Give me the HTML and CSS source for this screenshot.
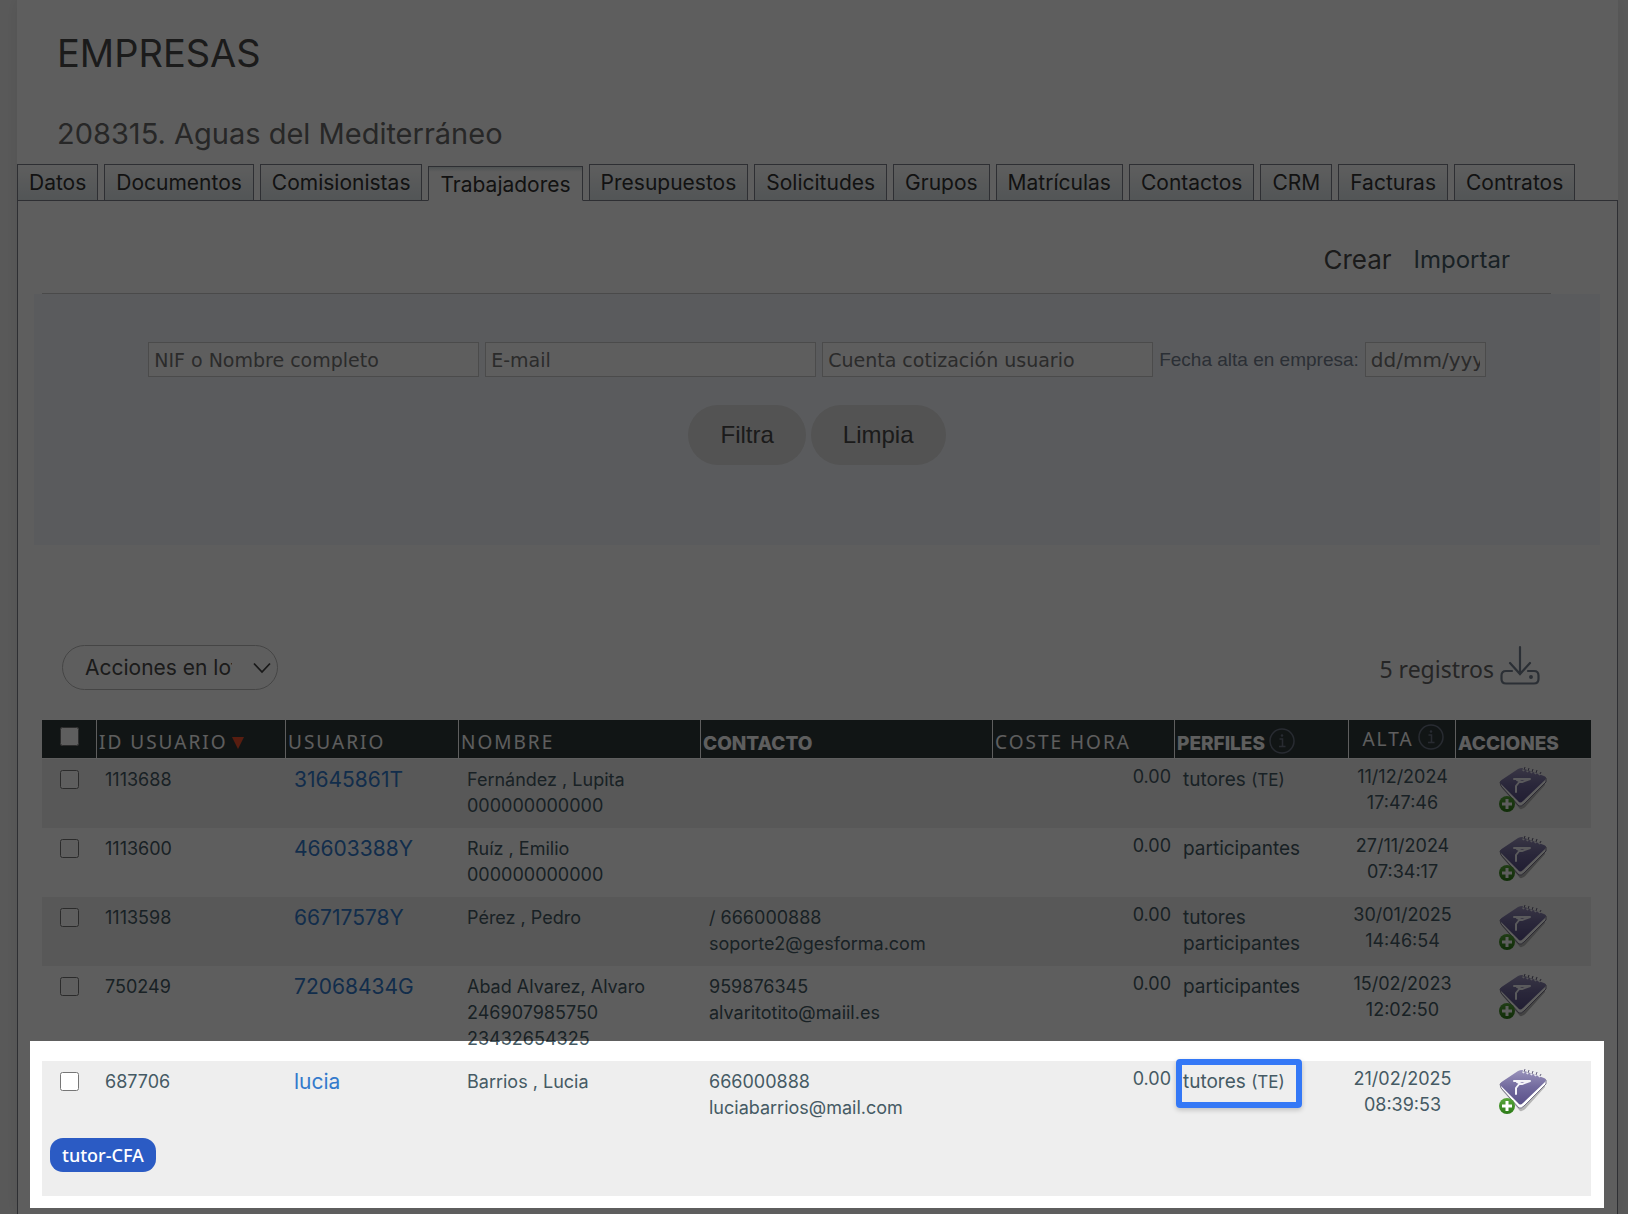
FILE: index.html
```html
<!DOCTYPE html>
<html lang="es">
<head>
<meta charset="utf-8">
<meta name="viewport" content="width=device-width, initial-scale=1">
<title>Empresas - Trabajadores</title>
<link rel="stylesheet" href="styles.css">
</head>
<body>
<svg class="sprite" aria-hidden="true">
  <defs>
    <linearGradient id="cover" x1="0" y1="0" x2="0" y2="1">
      <stop offset="0" stop-color="#9a93bb"/>
      <stop offset="0.5" stop-color="#726a9e"/>
      <stop offset="1" stop-color="#5a5189"/>
    </linearGradient>
    <linearGradient id="plus" x1="0" y1="0" x2="0" y2="1">
      <stop offset="0" stop-color="#5aa83c"/>
      <stop offset="1" stop-color="#2c7a17"/>
    </linearGradient>
  </defs>
  <symbol id="icon-note" viewBox="0 0 48 48">
    <path d="M2 22 L21 44 Q24 45 28 40 L46 20 L46 14 L22 36Z" fill="#b5b5b5"/>
    <path d="M1 17 L2 21 L20 41 Q22 42 25 39 L47 17 L47 13 L24 6Z" fill="#fff" stroke="#77738a" stroke-width="1"/>
    <path d="M1 17 Q2 15 4 14 L19 4 Q21 3 23 3 L45 11 Q48 12 46 15 L24 36 Q21 39 19 36 L2 19 Q1 18 1 17Z" fill="url(#cover)"/>
    <path d="M24 6 l2-4 M28 7 l2-4 M32 8 l2-4 M36 9 l2-4 M40 10 l2-3" stroke="#e9e8ef" stroke-width="2" fill="none"/>
    <path d="M25 5 l1-3 M29 6 l1-3 M33 7 l1-3 M37 8 l1-3 M41 9 l1-2" stroke="#6b6780" stroke-width="1" fill="none"/>
    <path d="M15 14 L31 14 L23 17 L18 15 M21 16 L17 21 L17 27" fill="none" stroke="#f4f3f8" stroke-width="2" stroke-linejoin="round" stroke-linecap="round"/>
    <circle cx="8" cy="39" r="8" fill="url(#plus)"/>
    <path d="M8 34 V44 M3 39 H13" stroke="#fff" stroke-width="3"/>
  </symbol>
  <symbol id="icon-info" viewBox="0 0 26 26">
    <circle cx="13" cy="13" r="12" fill="none" stroke="currentColor" stroke-width="1.5"/>
    <path d="M10.500 11 H13.500 V18 M10 18.500 H16.500" fill="none" stroke="currentColor" stroke-width="1.500"/>
    <circle cx="13" cy="7.500" r="1.200" fill="currentColor"/>
  </symbol>
</svg>

<div class="page">
  <h1 class="title">EMPRESAS</h1>
  <h2 class="company">208315. Aguas del Mediterráneo</h2>

  <nav class="tabs" aria-label="Secciones de empresa">
    <a class="tab" href="#datos">Datos</a>
    <a class="tab" href="#documentos">Documentos</a>
    <a class="tab" href="#comisionistas">Comisionistas</a>
    <a class="tab tab-active" href="#trabajadores" aria-current="page">Trabajadores</a>
    <a class="tab" href="#presupuestos">Presupuestos</a>
    <a class="tab" href="#solicitudes">Solicitudes</a>
    <a class="tab" href="#grupos">Grupos</a>
    <a class="tab" href="#matriculas">Matrículas</a>
    <a class="tab" href="#contactos">Contactos</a>
    <a class="tab" href="#crm">CRM</a>
    <a class="tab" href="#facturas">Facturas</a>
    <a class="tab" href="#contratos">Contratos</a>
  </nav>

  <main class="panel">
    <div class="toolbar">
      <a class="create" href="#crear">Crear</a>
      <a class="import" href="#importar">Importar</a>
    </div>

    <form class="filter">
      <div class="fields">
        <input class="field" type="text" placeholder="NIF o Nombre completo" aria-label="NIF o Nombre completo">
        <input class="field" type="text" placeholder="E-mail" aria-label="E-mail">
        <input class="field" type="text" placeholder="Cuenta cotización usuario" aria-label="Cuenta cotización usuario">
        <label class="field-label" for="alta">Fecha alta en empresa:</label>
        <input class="field field-date" id="alta" type="text" placeholder="dd/mm/yyyy">
      </div>
      <div class="buttons">
        <button class="button" type="button">Filtra</button>
        <button class="button" type="button">Limpia</button>
      </div>
    </form>

    <div class="listbar">
      <div class="batch">
        <select class="batch-select" aria-label="Acciones en lote">
          <option>Acciones en lote</option>
        </select>
        <svg class="chevron" viewBox="0 0 18 12" aria-hidden="true"><path d="M1 1.500 L9 10 L17 1.500" fill="none" stroke="#444" stroke-width="1.800"/></svg>
      </div>
      <div class="count">
        <span>5 registros</span>
        <a class="download" href="#descargar" aria-label="Descargar">
          <svg viewBox="0 0 40 40" width="40" height="40" fill="none" stroke="#74808f" stroke-width="2.200" stroke-linecap="round" aria-hidden="true">
            <path d="M20 2 V28 M10 18 L20 29 L30 18"/>
            <path d="M12 26 H6 Q1.500 26 1.500 30.500 V34 Q1.500 38.500 6 38.500 H34 Q38.500 38.500 38.500 34 V30.500 Q38.500 26 34 26 H28"/>
            <circle cx="31" cy="32" r="1.200" fill="#74808f" stroke-width="1.500"/>
          </svg>
        </a>
      </div>
    </div>

    <div class="listing">
      <table class="grid">
        <colgroup>
          <col class="c-check"><col class="c-id"><col class="c-user"><col class="c-name"><col class="c-contact">
          <col class="c-cost"><col class="c-profile"><col class="c-date"><col class="c-actions">
        </colgroup>
        <thead>
          <tr>
            <th class="check"><input type="checkbox" aria-label="Seleccionar todos"></th>
            <th>ID USUARIO<span class="sort" aria-hidden="true"></span></th>
            <th>USUARIO</th>
            <th>NOMBRE</th>
            <th class="strong">CONTACTO</th>
            <th>COSTE HORA</th>
            <th class="strong"><span class="with-info">PERFILES<svg class="info" aria-hidden="true"><use href="#icon-info"/></svg></span></th>
            <th class="center"><span class="with-info">ALTA<svg class="info" aria-hidden="true"><use href="#icon-info"/></svg></span></th>
            <th class="strong">ACCIONES</th>
          </tr>
        </thead>
        <tbody>
          <tr class="odd">
            <td class="check"><input type="checkbox" aria-label="Seleccionar 1113688"></td>
            <td>1113688</td>
            <td><a class="user" href="#31645861T">31645861T</a></td>
            <td>Fernández , Lupita<br>000000000000</td>
            <td></td>
            <td class="cost">0.00</td>
            <td class="profile">tutores <small>(TE)</small></td>
            <td class="date">11/12/2024<br>17:47:46</td>
            <td class="actions"><a href="#nota" aria-label="Añadir nota"><svg class="note"><use href="#icon-note"/></svg></a></td>
          </tr>
          <tr>
            <td class="check"><input type="checkbox" aria-label="Seleccionar 1113600"></td>
            <td>1113600</td>
            <td><a class="user" href="#46603388Y">46603388Y</a></td>
            <td>Ruíz , Emilio<br>000000000000</td>
            <td></td>
            <td class="cost">0.00</td>
            <td class="profile">participantes</td>
            <td class="date">27/11/2024<br>07:34:17</td>
            <td class="actions"><a href="#nota" aria-label="Añadir nota"><svg class="note"><use href="#icon-note"/></svg></a></td>
          </tr>
          <tr class="odd">
            <td class="check"><input type="checkbox" aria-label="Seleccionar 1113598"></td>
            <td>1113598</td>
            <td><a class="user" href="#66717578Y">66717578Y</a></td>
            <td>Pérez , Pedro</td>
            <td>/ 666000888<br>soporte2@gesforma.com</td>
            <td class="cost">0.00</td>
            <td class="profile">tutores<br>participantes</td>
            <td class="date">30/01/2025<br>14:46:54</td>
            <td class="actions"><a href="#nota" aria-label="Añadir nota"><svg class="note"><use href="#icon-note"/></svg></a></td>
          </tr>
          <tr>
            <td class="check"><input type="checkbox" aria-label="Seleccionar 750249"></td>
            <td>750249</td>
            <td><a class="user" href="#72068434G">72068434G</a></td>
            <td>Abad Alvarez, Alvaro<br>246907985750<br>23432654325</td>
            <td>959876345<br>alvaritotito@maiil.es</td>
            <td class="cost">0.00</td>
            <td class="profile">participantes</td>
            <td class="date">15/02/2023<br>12:02:50</td>
            <td class="actions"><a href="#nota" aria-label="Añadir nota"><svg class="note"><use href="#icon-note"/></svg></a></td>
          </tr>
          <tr class="odd">
            <td class="check"><input type="checkbox" aria-label="Seleccionar 687706"></td>
            <td>687706</td>
            <td><a class="user" href="#lucia">lucia</a></td>
            <td>Barrios , Lucia</td>
            <td>666000888<br>luciabarrios@mail.com</td>
            <td class="cost">0.00</td>
            <td class="profile">tutores <small>(TE)</small><span class="marker"></span></td>
            <td class="date">21/02/2025<br>08:39:53</td>
            <td class="actions"><a href="#nota" aria-label="Añadir nota"><svg class="note"><use href="#icon-note"/></svg></a></td>
          </tr>
          <tr class="odd">
            <td class="tags" colspan="9"><span class="tag">tutor-CFA</span></td>
          </tr>
        </tbody>
      </table>
      <div class="spotlight"></div>
    </div>
  </main>
</div>
</body>
</html>
```

FILE: styles.css
```css
* {
  box-sizing: border-box;
}

body {
  margin: 0;
  background: #f2f2f2;
  color: #455a64;
  font-family: Inter, "Liberation Sans", sans-serif;
  font-size: 18px;
  line-height: 26px;
}

a {
  color: inherit;
  text-decoration: none;
}

.sprite {
  position: absolute;
  width: 0;
  height: 0;
}

.page {
  display: flex;
  flex-direction: column;
  min-height: 100vh;
  margin: 0 10px 0 17px;
  padding-top: 29px;
  background: #fff;
  box-shadow: 0 0 16px rgba(0, 0, 0, 0.08);
}

.title {
  margin: 0 40px 39px;
  color: #4a4a4a;
  font-size: 38px;
  font-weight: 400;
  line-height: 48px;
}

.company {
  margin: 0 40px 12px;
  color: #6a6a6a;
  font-size: 29px;
  font-weight: 400;
  line-height: 36px;
}

/* Tabs */

.tabs {
  position: relative;
  z-index: 1;
  display: flex;
  gap: 6px;
  height: 37px;
  margin-bottom: -1px;
}

.tab {
  height: 37px;
  padding: 0 11px;
  border: 1px solid #7c7f8b;
  background: linear-gradient(#fff, #dfe7ea);
  color: #333;
  font-size: 21px;
  line-height: 36px;
}

.tab-active {
  height: 35px;
  margin-top: 2px;
  border-bottom-color: #fff;
  background: linear-gradient(#d6e0e2, #fff 5px);
}

.panel {
  flex: 1;
  border: 1px solid #7c7f8b;
  border-bottom: 0;
}

/* Create and import links */

.toolbar {
  display: flex;
  justify-content: flex-end;
  align-items: center;
  gap: 22px;
  height: 93px;
  margin: 0 66px 0 24px;
  padding: 26px 41px 0 0;
  border-bottom: 1px solid #c8c8c8;
}

.create {
  color: #4a4a4a;
  font-size: 26px;
}

.import {
  font-size: 24px;
}

/* Filter */

.filter {
  margin: 0 17px 0 16px;
  padding: 48px 24px 80px;
  background: #f4f7fc;
}

.fields {
  display: flex;
  justify-content: center;
  align-items: center;
  gap: 6px;
}

.field {
  width: 331px;
  height: 35px;
  padding: 0 5px;
  border: 1px solid #ccc;
  border-radius: 0;
  background: #fff;
  color: #757575;
  font-family: "DejaVu Sans", sans-serif;
  font-size: 19px;
}

.field::placeholder {
  color: #757575;
  opacity: 1;
}

.field-date {
  width: 121px;
  font-size: 20px;
}

.field-label {
  color: #74808f;
  font-family: "Liberation Sans", sans-serif;
  font-size: 19px;
  white-space: nowrap;
}

.buttons {
  display: flex;
  justify-content: center;
  gap: 5px;
  margin-top: 28px;
}

.button {
  height: 60px;
  padding: 0 32px;
  border: 0;
  border-radius: 30px;
  background: #e0e0e0;
  color: #4a4a4a;
  font-family: "Liberation Sans", sans-serif;
  font-size: 24px;
}

/* Batch actions and record count */

.listbar {
  display: flex;
  justify-content: space-between;
  align-items: center;
  margin: 100px 77px 30px 44px;
}

.batch {
  position: relative;
}

.batch-select {
  display: block;
  width: 216px;
  height: 45px;
  padding: 0 45px 0 22px;
  border: 1px solid #bbb;
  border-radius: 23px;
  appearance: none;
  background: #fff;
  color: #4a4a4a;
  font-family: inherit;
  font-size: 21px;
  text-overflow: clip;
}

.chevron {
  position: absolute;
  top: 17px;
  right: 7px;
  width: 18px;
  height: 12px;
  pointer-events: none;
}

.count {
  display: flex;
  align-items: center;
  gap: 6px;
  color: #666;
  font-family: "Noto Sans", sans-serif;
  font-size: 23px;
}

.count span {
  padding-top: 2px;
}

.download {
  height: 45px;
}

/* Workers table */

.listing {
  position: relative;
  margin: 0 26px 0 24px;
}

.grid {
  width: 100%;
  border-collapse: separate;
  border-spacing: 0;
  table-layout: fixed;
}

.c-check { width: 55px; }
.c-id { width: 189px; }
.c-user { width: 173px; }
.c-name { width: 242px; }
.c-cost { width: 182px; }
.c-profile { width: 174px; }
.c-date { width: 107px; }
.c-actions { width: 135px; }

.grid th {
  height: 39px;
  padding: 5px 0 0 2px;
  border-right: 1px solid #fff;
  border-bottom: 1px solid #fff;
  background: #2f393b;
  color: #fff;
  font-family: "Noto Sans", sans-serif;
  font-size: 19px;
  font-weight: 400;
  letter-spacing: 2px;
  text-align: left;
  white-space: nowrap;
}

.grid th:last-child {
  border-right: 0;
}

.grid th.strong {
  padding-top: 9px;
  font-family: inherit;
  font-weight: 800;
  letter-spacing: 0;
}

.grid th.check {
  padding: 0;
}

.grid th.center {
  padding-top: 0;
  text-align: center;
}

.sort {
  display: inline-block;
  margin-left: 4px;
  border: 6px solid transparent;
  border-top: 12px solid #ee4f2d;
  border-bottom: 0;
}

.with-info {
  display: inline-flex;
  align-items: center;
  gap: 4px;
}

.info {
  width: 26px;
  height: 26px;
  margin-top: -5px;
  color: #6c7686;
}

.grid td {
  padding: 8px 0 9px 8px;
  vertical-align: top;
}

.odd td {
  background: #eee;
}

.grid .check {
  vertical-align: top;
}

.check input {
  display: block;
  width: 19px;
  height: 19px;
  margin: 3px 0 0 10px;
}

.grid th.check input {
  margin: 7px 0 0 18px;
}

.user {
  color: #337acc;
  font-size: 21px;
}

.grid .cost {
  padding: 5px 4px 0 0;
  text-align: right;
}

.grid .profile {
  position: relative;
  font-size: 19px;
}

.profile small {
  font-size: 17px;
}

.grid .date {
  padding: 5px 0 0;
  text-align: center;
}

.grid .actions {
  padding: 6px 0 0 43px;
}

.note {
  display: block;
  width: 48px;
  height: 48px;
}

.grid .tags {
  padding: 8px 8px 24px;
}

.tag {
  display: block;
  width: max-content;
  padding: 0 12px;
  border-radius: 13px;
  background: #2b5bc4;
  color: #fff;
  font-family: "Noto Sans", sans-serif;
  font-size: 18px;
  font-weight: 500;
  line-height: 34px;
}

/* Guide overlay: frame round the profile and cut-out round the row */

.marker {
  position: absolute;
  top: -2px;
  left: 1px;
  width: 126px;
  height: 49px;
  border: 6px solid #3478f6;
  border-radius: 4px;
  box-shadow: 0 2px 5px rgba(0, 0, 0, 0.2);
}

.spotlight {
  position: absolute;
  z-index: 2;
  right: -13px;
  bottom: -12px;
  left: -12px;
  height: 167px;
  box-shadow: 0 0 0 9999px rgba(0, 0, 0, 0.63);
  pointer-events: none;
}
```
